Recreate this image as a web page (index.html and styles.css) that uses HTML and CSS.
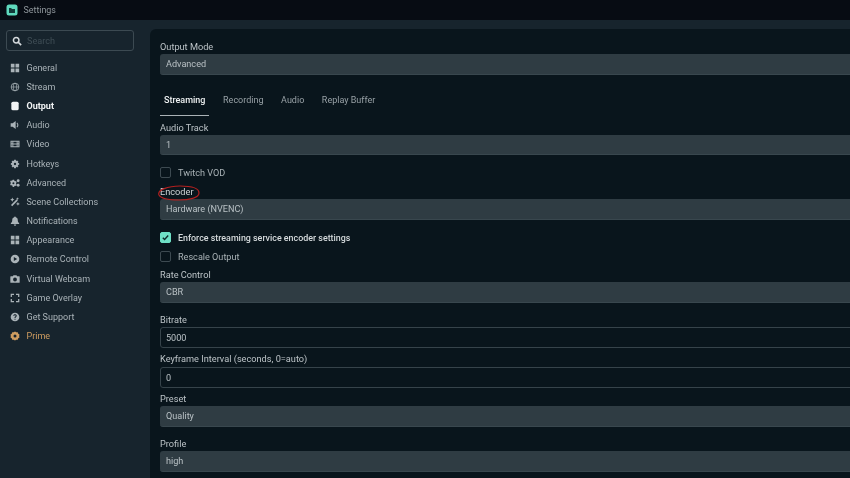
FILE: index.html
```html
<!DOCTYPE html>
<html lang="en">
<head>
<meta charset="utf-8">
<title>Settings</title>
<link rel="stylesheet" href="styles.css">
</head>
<body>
<header class="titlebar">
  <svg class="logo" viewBox="0 0 12 12"><rect x="0.5" y="0.5" width="11" height="11" rx="2.5" fill="#5fd9bd"/><path d="M3 4h2l1 1h3v4H3z" fill="#123b3a"/></svg>
  <span class="title">Settings</span>
</header>
<div class="window">
  <aside class="sidebar">
    <div class="search">
      <svg class="search-icon" viewBox="0 0 12 12"><circle cx="5" cy="5" r="3.3" fill="none" stroke="#d5dadd" stroke-width="1.8"/><path d="M7.5 7.5L11 11" stroke="#d5dadd" stroke-width="2"/></svg>
      <span>Search</span>
    </div>
    <nav class="nav">
      <a class="item"><svg viewBox="0 0 12 12"><path d="M1 1h4.4v4.4H1zM6.600 1H11v4.400H6.600zM1 6.600h4.400V11H1zM6.600 6.600H11V11H6.600z"/></svg>General</a>
      <a class="item"><svg viewBox="0 0 12 12"><circle cx="6" cy="6" r="4.6" fill="none" stroke="currentColor" stroke-width="1"/><ellipse cx="6" cy="6" rx="2" ry="4.6" fill="none" stroke="currentColor" stroke-width=".8"/><path d="M1.400 6h9.200" stroke="currentColor" stroke-width=".8"/></svg>Stream</a>
      <a class="item active"><svg viewBox="0 0 12 12"><rect x="1.600" y=".8" width="8.800" height="10.400" rx="2"/></svg>Output</a>
      <a class="item"><svg viewBox="0 0 12 12"><path d="M.8 4h2.400L6.800 1.200v9.600L3.200 8H.8z"/><path d="M8.200 3.400a3.400 3.400 0 0 1 0 5.200" fill="none" stroke="currentColor" stroke-width="1.300"/></svg>Audio</a>
      <a class="item"><svg viewBox="0 0 12 12"><path fill-rule="evenodd" d="M.6 2h10.800v8H.6zM3 3.200H1.800v1.400H3zm0 2.400H1.800v1H3zm0 2H1.800v1.200H3zM10.200 3.200H9v1.400h1.200zm0 2.400H9v1h1.200zm0 2H9v1.200h1.200zM8 3.200H4v2.200h4zm0 3.400H4v2.200h4z"/></svg>Video</a>
      <a class="item"><svg viewBox="0 0 12 12"><path fill-rule="evenodd" d="M5 .8h2l.3 1.600 1.300-.7 1.500 1.500-.8 1.300 1.700.5v2l-1.700.3.800 1.300-1.500 1.500-1.300-.8L7 11.200H5l-.3-1.900-1.300.8-1.500-1.500.8-1.300L1 7V5l1.700-.5-.8-1.300 1.500-1.500 1.300.7zM6 4.600a1.400 1.400 0 1 0 0 2.800 1.400 1.400 0 0 0 0-2.800z"/></svg>Hotkeys</a>
      <a class="item"><svg viewBox="0 0 12 12"><path fill-rule="evenodd" d="M3.200 2.200h1.800l.2 1.100 1 .5 1-.3.900 1.500-.8.800v1.400l.8.800-.9 1.500-1-.3-1 .5-.2 1.100H3.200L3 9.200 2 8.700 1 9 .1 7.500l.8-.8V5.300l-.8-.8L1 3l1 .3 1-.5zM4.100 5a1.200 1.200 0 1 0 0 2.400 1.200 1.200 0 0 0 0-2.400z"/><circle cx="9.800" cy="3.300" r="1.700"/><circle cx="9.800" cy="8.700" r="1.700"/></svg>Advanced</a>
      <a class="item"><svg viewBox="0 0 12 12"><path d="M1.200 9.600L8 2.800l1.400 1.400-6.800 6.800z"/><path d="M2.800.6l.8 1.700 1.700.8-1.700.8-.8 1.700L2 4.100.3 3.100 2 2.300zM9.500 6l.7 1.600 1.600.7-1.600.7-.7 1.600-.7-1.600-1.600-.7 1.600-.7zM9 .4l.5 1.200 1.200.5-1.200.5L9 3.800l-.5-1.200-1.200-.5 1.200-.5z"/></svg>Scene Collections</a>
      <a class="item"><svg viewBox="0 0 12 12"><path d="M6 .6c.6 0 1 .4 1 1 1.600.4 2.300 1.700 2.300 3.200 0 2 .5 2.900 1.700 3.900v.9H1v-.9C2.200 7.700 2.700 6.800 2.700 4.800c0-1.500.7-2.800 2.300-3.200 0-.6.4-1 1-1zM4.500 10.200h3a1.500 1.500 0 0 1-3 0z"/></svg>Notifications</a>
      <a class="item"><svg viewBox="0 0 12 12"><path d="M1 1h4.400v4.400H1zM6.600 1H11v4.400H6.600zM1 6.600h4.400V11H1zM6.600 6.600H11V11H6.600z"/></svg>Appearance</a>
      <a class="item"><svg viewBox="0 0 12 12"><path fill-rule="evenodd" d="M6 .8a5.200 5.200 0 1 1 0 10.400A5.200 5.200 0 0 1 6 .8zM4.600 3.500v5L8.600 6z"/></svg>Remote Control</a>
      <a class="item"><svg viewBox="0 0 12 12"><path fill-rule="evenodd" d="M4.200 1.600h3.600l.8 1.200H11a.6.6 0 0 1 .6.6v6.400a.6.6 0 0 1-.6.6H1a.6.6 0 0 1-.6-.6V3.400A.6.6 0 0 1 1 2.800h2.400zM6 4.300a2.300 2.300 0 1 0 0 4.600 2.300 2.300 0 0 0 0-4.600z"/></svg>Virtual Webcam</a>
      <a class="item"><svg viewBox="0 0 12 12"><path d="M.8.8h4v1.500H2.300v2.500H.8zM7.200.8h4v4H9.700V2.300H7.200zM.8 7.200h1.500v2.500h2.500v1.500h-4zM9.700 7.200h1.500v4h-4V9.700h2.500z"/></svg>Game Overlay</a>
      <a class="item"><svg viewBox="0 0 12 12"><path fill-rule="evenodd" d="M6 .8a5.200 5.200 0 1 1 0 10.400A5.200 5.200 0 0 1 6 .8zM5.400 8v1.200h1.200V8zM6 2.700c-1.200 0-2.100.7-2.200 1.900h1.200c.1-.5.400-.8 1-.8s.9.300.9.700c0 .9-1.500.9-1.500 2.600h1.200c0-1.200 1.500-1.300 1.500-2.700 0-1-.9-1.700-2.100-1.700z"/></svg>Get Support</a>
      <a class="item prime"><svg viewBox="0 0 12 12"><path fill-rule="evenodd" d="M6 .6l1.500 1 1.800-.1.600 1.700 1.500 1.100L11 6l.4 1.700-1.500 1.100-.6 1.700-1.800-.1-1.500 1-1.500-1-1.800.1-.6-1.700L.6 7.700 1 6 .6 4.300l1.500-1.100.6-1.700 1.800.1zM6 4.200a1.800 1.800 0 1 0 0 3.600 1.800 1.800 0 0 0 0-3.600z"/></svg>Prime</a>
    </nav>
  </aside>
  <main class="panel">
    <label class="label">Output Mode</label>
    <div class="select">Advanced</div>
    <div class="tabs">
      <span class="tab current">Streaming</span>
      <span class="tab">Recording</span>
      <span class="tab">Audio</span>
      <span class="tab">Replay Buffer</span>
    </div>
    <label class="label">Audio Track</label>
    <div class="select tight">1</div>
    <div class="check"><span class="box"></span>Twitch VOD</div>
    <label class="label encoder">Encoder
      <svg class="circle" viewBox="0 0 43 18"><path d="M2 11C0 6 11 2 23 2c10 0 19 2 19 7 0 5-10 7-20 7C11 16 4 15 2 11z" fill="none" stroke="#b3201f" stroke-width="1.200"/></svg>
    </label>
    <div class="select after-encoder">Hardware (NVENC)</div>
    <div class="check strong"><span class="box on"><svg viewBox="0 0 10 10"><path d="M2 5.200l2 2 4-4.400" fill="none" stroke="#0e2a2b" stroke-width="1.500"/></svg></span>Enforce streaming service encoder settings</div>
    <div class="check rescale"><span class="box"></span>Rescale Output</div>
    <label class="label">Rate Control</label>
    <div class="select">CBR</div>
    <label class="label">Bitrate</label>
    <div class="input">5000</div>
    <label class="label keyframe">Keyframe Interval (seconds, 0=auto)</label>
    <div class="input">0</div>
    <label class="label">Preset</label>
    <div class="select">Quality</div>
    <label class="label">Profile</label>
    <div class="select">high</div>
  </main>
</div>
</body>
</html>
```
FILE: styles.css
```css
* { box-sizing: border-box; }
html, body { margin: 0; height: 100%; overflow: hidden; background: #17242d; }
body {
  width: 850px;
  height: 478px;
  font-family: Roboto, "Liberation Sans", sans-serif;
  font-size: 9.100px;
  color: #c3cacd;
  display: flex;
  flex-direction: column;
  filter: blur(0.35px);
}
.titlebar {
  height: 20px;
  flex: none;
  background: #070c13;
  display: flex;
  align-items: center;
  padding-left: 6px;
  gap: 5.500px;
}
.logo { width: 12px; height: 12px; }
.title { color: #8f979c; font-size: 8.900px; }
.window { flex: 1; display: flex; min-height: 0; }
.sidebar { width: 150px; flex: none; padding: 10px 16px 0 6px; }
.search {
  height: 21px;
  width: 128px;
  border: 1px solid #3c4a52;
  border-radius: 3px;
  display: flex;
  align-items: center;
  padding-left: 5px;
  gap: 5px;
  color: #3f4d55;
}
.search-icon { width: 10px; height: 10px; }
.nav { margin-top: 7px; display: flex; flex-direction: column; margin-left: 4px; font-size: 9px; }
.item {
  height: 19.200px;
  display: flex;
  align-items: center;
  gap: 6.500px;
  color: #aab3b8;
}
.item svg { width: 10px; height: 10px; flex: none; fill: currentColor; }
.item.active { color: #f2f4f5; font-weight: 700; }
.item.prime { color: #cf9d60; font-weight: 400; }
.panel {
  flex: 1;
  min-width: 0;
  margin-top: 9px;
  background: #09151c;
  border-top-left-radius: 6px;
  padding: 11px 0 0 10px;
  display: flex;
  flex-direction: column;
  margin-right: -20px;
}
.panel > * { flex: none; }
.label {
  height: 14px;
  line-height: 14px;
  color: #bcc3c7;
  display: block;
  font-size: 9.200px;
}
.label.keyframe { height: 15px; }
.select, .input {
  height: 21px;
  border-radius: 3px;
  padding-left: 6px;
  line-height: 21px;
  color: #b9c1c5;
}
.select { background: #2f3c43; border-bottom: 1px solid #39474e; margin-bottom: 10px; }
.input { background: #09151c; border: 1px solid #36434a; padding-left: 5px; line-height: 20px; margin-bottom: 4px; }
.tabs {
  display: flex;
  height: 31px;
  margin-bottom: 5px;
  gap: 17.600px;
  padding-left: 4px;
}
.tab { line-height: 31px; color: #98a1a6; position: relative; font-size: 9px; }
.tab.current { color: #eef1f2; font-weight: 500; }
.tab.current::after {
  content: "";
  position: absolute;
  left: -4px;
  right: -4px;
  bottom: 0;
  height: 1px;
  background: #aab2b6;
}
.select.tight { margin-bottom: 8px; height: 20px; }
.check {
  height: 19px;
  display: flex;
  align-items: center;
  gap: 7px;
  color: #a9b2b6;
}
.check.strong { color: #d6dbdd; font-weight: 500; font-size: 8.900px; }
.check.rescale { margin-bottom: 2px; }
.box {
  width: 11px;
  height: 11px;
  border: 1px solid #3d4a51;
  border-radius: 2px;
  flex: none;
}
.box.on { background: #6fe0c6; border-color: #6fe0c6; display: flex; }
.box svg { width: 9px; height: 9px; }
.encoder { position: relative; margin-top: 3px; color: #cfd4d6; }
.circle {
  position: absolute;
  left: -3px;
  top: -1px;
  width: 43px;
  height: 18px;
}
.select.after-encoder { margin-bottom: 8px; }
```
